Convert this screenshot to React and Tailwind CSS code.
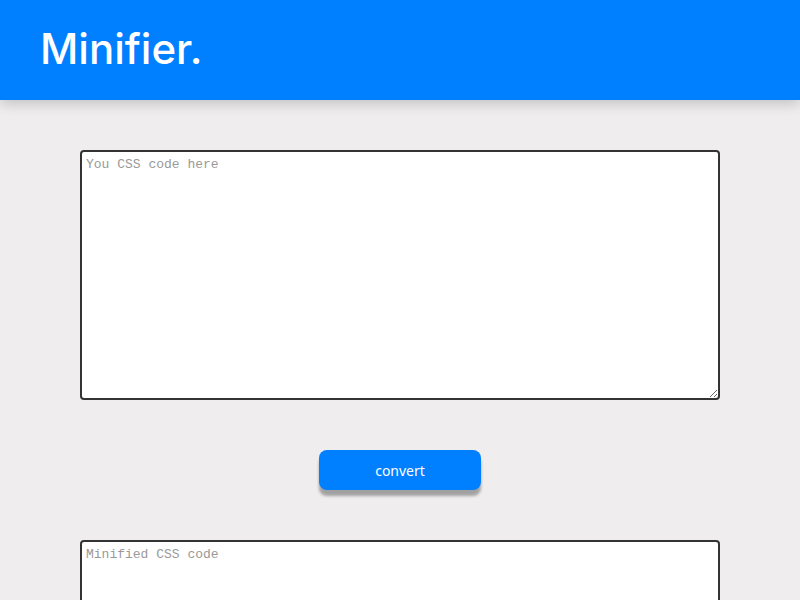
import React, { useState } from "react";

const App = () => {
  const [input, setInput] = useState("");
  const [output, setOutput] = useState("");

  const minify = () => {
    setOutput(
      input
        .replace(/\/\*[\s\S]*?\*\//g, "")
        .replace(/\s+/g, " ")
        .replace(/\s*([{}:;,])\s*/g, "$1")
        .trim()
    );
  };

  return (
    <div className="min-h-[600px] bg-[#efedee]">
      {/* Header */}
      <header className="h-[100px] bg-[#0080ff] shadow-[0_4px_12px_rgba(0,0,0,0.18)] flex items-center px-10">
        <h1 className="text-white text-[42px] font-medium font-['Inter',sans-serif] leading-none -mt-[2px]">
          Minifier.
        </h1>
      </header>

      <main className="flex flex-col items-center pt-[50px]">
        <textarea
          value={input}
          onChange={(e) => setInput(e.target.value)}
          placeholder="You CSS code here"
          className="w-[640px] h-[250px] bg-white border-2 border-[#333] rounded-[4px] px-[4px] py-[3px] text-[13px] font-['Liberation_Mono',monospace] placeholder:text-[#999] outline-none"
        />

        <button
          onClick={minify}
          className="mt-[50px] w-[162px] h-[40px] rounded-[8px] bg-[#0080ff] text-white text-[14px] font-['Noto_Sans',sans-serif] shadow-[0_6px_3px_rgba(0,0,0,0.32)]"
        >
          convert
        </button>

        <textarea
          value={output}
          readOnly
          placeholder="Minified CSS code"
          className="mt-[50px] w-[640px] h-[250px] bg-white border-2 border-[#333] rounded-[4px] px-[4px] py-[3px] text-[13px] font-['Liberation_Mono',monospace] placeholder:text-[#999] outline-none"
        />
      </main>
    </div>
  );
};

export default App;
